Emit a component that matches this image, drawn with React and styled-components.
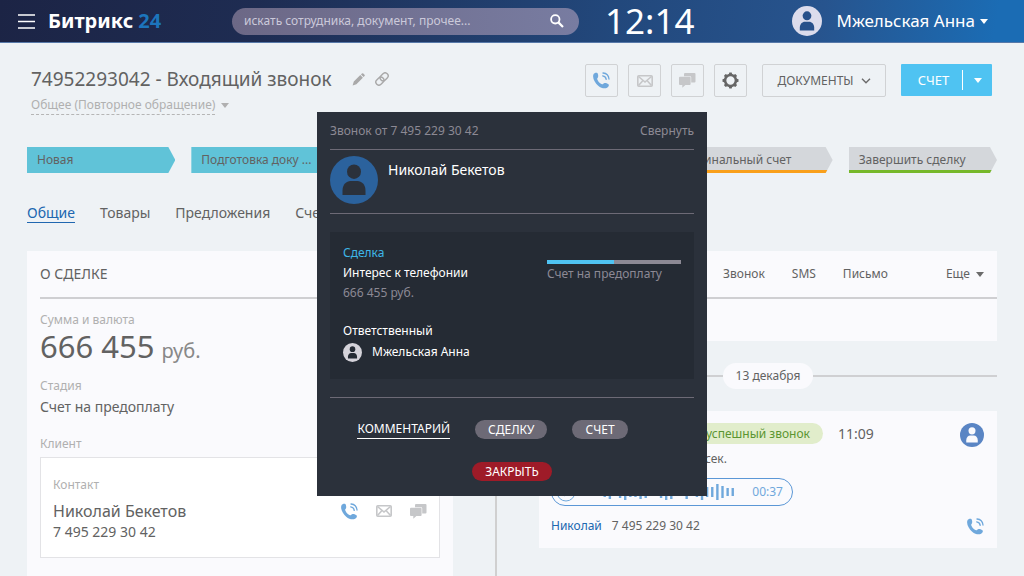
import React from 'react'
import styled, { createGlobalStyle } from 'styled-components'

const stages = [
  { name: 'Новая', done: true },
  { name: 'Подготовка доку ...', done: true },
  { name: 'В работе', done: true },
  { name: 'Счет на предоплату' },
  { name: 'Финальный счет', line: '#f9a01b' },
  { name: 'Завершить сделку', line: '#76b82a' },
]
const tabs = ['Общие', 'Товары', 'Предложения', 'Счета']
const actions = ['Комментарий', 'Ждать', 'Звонок', 'SMS', 'Письмо']
const wave = [4, 2, 5, 7, 2, 6, 8, 5, 5, 7, 6, 4, 2, 6, 8, 7, 4, 2, 7, 2, 5, 8, 5, 5, 8, 6, 4, 4]

function PhoneIcon() {
  return (
    <svg width="17" height="17" viewBox="0 0 17 17" aria-hidden="true">
      <path
        fill="#6fa8dc"
        d="M.8 1.8C1.6.8 3.5.4 4.3 1c.8.8 1.2 3.2.7 4.3-.2.6-.9.9-.8 1.700.4 2 2.900 4.800 5 5.200.8.1 1.200-.8 1.900-1 1.300-.4 3.800.4 4.600 1.400.6 1-.3 2.500-1.600 3.200-2.400 1.200-6 .5-8.900-2.100C2.300 11.200.2 7.600.1 4.500.1 3.400.2 2.500.8 1.800z"
      />
      <g fill="none" stroke="#6fa8dc" strokeLinecap="round">
        <path strokeWidth="1.300" d="M10 1c3.300.3 5.700 2.700 6 6" />
        <path strokeWidth="1.300" d="M9.700 3.800c2 .3 3.300 1.500 3.500 3.600" />
      </g>
    </svg>
  )
}

function MailIcon() {
  return (
    <svg width="16" height="12" viewBox="0 0 16 12" fill="none" stroke="#c6c7c9" strokeWidth="1.600" aria-hidden="true">
      <rect x=".8" y=".8" width="14.400" height="10.400" rx="1" />
      <path d="M1.500 1.500 8 7l6.500-5.500M1.500 10.500 6 5.500M14.500 10.500 10 5.500" />
    </svg>
  )
}

function ChatIcon() {
  return (
    <svg width="17" height="15" viewBox="0 0 17 15" fill="#c6c7c9" aria-hidden="true">
      <path d="M6 0h9.500a1 1 0 0 1 1 1v7.600a1 1 0 0 1-1 1h-3.300V4.200a1 1 0 0 0-1-1H5V1a1 1 0 0 1 1-1z" />
      <path d="M1 3.700h9.600a1 1 0 0 1 1 1V11a1 1 0 0 1-1 1H6.400l-3.100 2.800V12H1a1 1 0 0 1-1-1V4.700a1 1 0 0 1 1-1z" />
    </svg>
  )
}

function GearIcon() {
  return (
    <svg width="17" height="17" viewBox="0 0 17 17" aria-hidden="true">
      <circle cx="8.500" cy="8.500" r="5.400" fill="none" stroke="#666" strokeWidth="2.500" />
      {[0, 45, 90, 135, 180, 225, 270, 315].map(a => (
        <path key={a} fill="#666" d="M6.600 3 7.300.5h2.400L10.400 3z" transform={`rotate(${a} 8.500 8.500)`} />
      ))}
    </svg>
  )
}

function PencilIcon() {
  return (
    <svg width="13" height="13" viewBox="0 0 13 13" fill="#a9a9a9" aria-hidden="true">
      <path d="M.6 12.400 1.800 8.600 8.300 2.100l2.600 2.600-6.500 6.500zM9 1.400l.9-.9a1 1 0 0 1 1.400 0l1.200 1.200a1 1 0 0 1 0 1.400l-.9.9z" />
    </svg>
  )
}

function LinkIcon() {
  return (
    <svg width="14" height="14" viewBox="0 0 14 14" fill="none" stroke="#a9a9a9" strokeWidth="1.400" aria-hidden="true">
      <g transform="rotate(-45 7 7)">
        <rect x="-.4" y="4" width="8.800" height="6" rx="3" />
        <rect x="5.600" y="4" width="8.800" height="6" rx="3" />
      </g>
    </svg>
  )
}

function Avatar({ size, bg, fg }) {
  return (
    <svg width={size} height={size} viewBox="0 0 48 48" aria-hidden="true">
      <circle cx="24" cy="24" r="24" fill={bg} />
      <ellipse cx="24" cy="15.700" rx="7" ry="7.200" fill={fg} />
      <path fill={fg} d="M12.500 39v-4.500c0-6 4-9.500 8-9.500h7c4 0 8 3.500 8 9.500V39z" />
    </svg>
  )
}

function Waveform() {
  return (
    <svg width="142" height="18" viewBox="0 0 142 18" stroke="#6fa8dc" strokeWidth="2.400" aria-hidden="true">
      {wave.map((h, i) => (
        <path key={i} d={`M${1.5 + i * 5.12} ${9 - h}v${h * 2}`} />
      ))}
    </svg>
  )
}

function CallDialog() {
  return (
    <Overlay>
      <Dialog role="dialog" aria-label="Звонок от 7 495 229 30 42">
        <DialogHead>
          <span>Звонок от 7 495 229 30 42</span>
          <TextButton>Свернуть</TextButton>
        </DialogHead>
        <Caller>
          <Avatar size={48} bg="#2b629d" fg="#2b313b" />
          <CallerName>Николай Бекетов</CallerName>
        </Caller>
        <DealBox>
          <div>
            <DealLink href="#deal">Сделка</DealLink>
            <Strong>Интерес к телефонии</Strong>
            <Muted>666 455 руб.</Muted>
            <Responsible>
              <Strong>Ответственный</Strong>
              <Person>
                <Avatar size={19} bg="#d5d3da" fg="#252b34" />
                Мжельская Анна
              </Person>
            </Responsible>
          </div>
          <Stage>
            <Progress role="progressbar" aria-label="Счет на предоплату" aria-valuenow={50}>
              <ProgressFill style={{ width: '50%' }} />
            </Progress>
            <Muted>Счет на предоплату</Muted>
          </Stage>
        </DealBox>
        <DialogActions>
          <CommentButton>КОММЕНТАРИЙ</CommentButton>
          <PillButton>СДЕЛКУ</PillButton>
          <PillButton>СЧЕТ</PillButton>
        </DialogActions>
        <CloseRow>
          <PillButton $danger>ЗАКРЫТЬ</PillButton>
        </CloseRow>
      </Dialog>
    </Overlay>
  )
}

export default function App() {
  return (
    <Page>
      <GlobalStyle />
      <Header>
        <MenuButton aria-label="Меню">
          <svg width="17" height="15" viewBox="0 0 17 15" stroke="#fff" strokeWidth="1.600">
            <path d="M0 1h17M0 7.500h17M0 14h17" />
          </svg>
        </MenuButton>
        <Logo href="#home">Битрикс <b>24</b></Logo>
        <Search>
          <SearchInput type="search" aria-label="Поиск" placeholder="искать сотрудника, документ, прочее..." />
          <svg width="14" height="14" viewBox="0 0 14 14" fill="none" stroke="#fff" aria-hidden="true">
            <circle cx="5.300" cy="5.300" r="4.200" strokeWidth="1.800" />
            <path d="m8.600 8.600 4.400 4.400" strokeWidth="2.200" />
          </svg>
        </Search>
        <Clock>12:14</Clock>
        <UserMenu>
          <Avatar size={30} bg="#dcdcec" fg="#27508a" />
          <span>Мжельская Анна</span>
          <Caret $color="#fff" />
        </UserMenu>
      </Header>

      <Main>
        <TopRow>
          <Heading>
            <Title>
              74952293042 - Входящий звонок
              <PencilIcon />
              <LinkIcon />
            </Title>
            <Category>
              <span>Общее (Повторное обращение)</span>
              <Caret $color="#b0b0b0" />
            </Category>
          </Heading>
          <Toolbar>
            <IconButton aria-label="Позвонить"><PhoneIcon /></IconButton>
            <IconButton aria-label="Письмо"><MailIcon /></IconButton>
            <IconButton aria-label="Чат"><ChatIcon /></IconButton>
            <IconButton aria-label="Настройки"><GearIcon /></IconButton>
          </Toolbar>
          <DocsButton>
            ДОКУМЕНТЫ
            <svg width="10" height="6" viewBox="0 0 10 6" fill="none" stroke="#6b6b6b" strokeWidth="1.400">
              <path d="m1 .8 4 4 4-4" />
            </svg>
          </DocsButton>
          <BillButton>
            <span>СЧЕТ</span>
            <Caret $color="#fff" />
          </BillButton>
        </TopRow>

        <Stages>
          {stages.map(s => (
            <StageItem key={s.name} $done={s.done} $line={s.line}>{s.name}</StageItem>
          ))}
        </Stages>

        <Tabs>
          {tabs.map((t, i) => (
            <Tab key={t} href="#tab" $active={i === 0}>{t}</Tab>
          ))}
        </Tabs>

        <Columns>
          <DealCard>
            <CardTitle>О СДЕЛКЕ</CardTitle>
            <Field>
              <Label>Сумма и валюта</Label>
              <Amount>666 455 <small>руб.</small></Amount>
            </Field>
            <Field>
              <Label>Стадия</Label>
              <Value>Счет на предоплату</Value>
            </Field>
            <ClientField>
              <Label>Клиент</Label>
              <Contact>
                <Label>Контакт</Label>
                <ContactRow>
                  <ContactName>Николай Бекетов</ContactName>
                  <GhostButton aria-label="Позвонить"><PhoneIcon /></GhostButton>
                  <GhostButton aria-label="Письмо"><MailIcon /></GhostButton>
                  <GhostButton aria-label="Чат"><ChatIcon /></GhostButton>
                </ContactRow>
                <ContactPhone>7 495 229 30 42</ContactPhone>
              </Contact>
            </ClientField>
          </DealCard>

          <Divider />

          <Timeline>
            <Composer>
              <ActionBar>
                {actions.map(a => <ActionLink key={a} href="#action">{a}</ActionLink>)}
                <More href="#more">Еще <Caret $color="#6b6b6b" /></More>
              </ActionBar>
            </Composer>
            <DateRow><DatePill>13 декабря</DatePill></DateRow>
            <CallCard>
              <CallHead>
                <CallKind>Входящий звонок</CallKind>
                <Badge>успешный звонок</Badge>
                <time>11:09</time>
                <Avatar size={24} bg="#5a85c4" fg="#fafafd" />
              </CallHead>
              <Duration>Длительность звонка – 37 сек.</Duration>
              <Player>
                <GhostButton aria-label="Слушать">
                  <svg width="20" height="20" viewBox="0 0 20 20" fill="none" stroke="#6fa8dc">
                    <circle cx="10" cy="10" r="9" />
                    <path d="M8 6v8l6-4z" fill="#6fa8dc" />
                  </svg>
                </GhostButton>
                <Waveform />
                <span>00:37</span>
              </Player>
              <CallFoot>
                <a href="#client">Николай</a>
                <span>7 495 229 30 42</span>
                <GhostButton aria-label="Перезвонить"><PhoneIcon /></GhostButton>
              </CallFoot>
            </CallCard>
          </Timeline>
        </Columns>
      </Main>
      <CallDialog />
    </Page>
  )
}

const GlobalStyle = createGlobalStyle`
  * { box-sizing: border-box; }
  body {
    margin: 0;
    background: #eef2f5;
    color: #626262;
    font: 13px/20px "Noto Sans", "Open Sans", sans-serif;
  }
  a { color: inherit; text-decoration: none; }
  button {
    margin: 0;
    padding: 0;
    border: 0;
    background: none;
    color: inherit;
    font: inherit;
    cursor: pointer;
  }
  svg { display: block; flex: none; }
`
const Page = styled.div`
  display: flex;
  flex-direction: column;
  min-height: 100vh;
`
const Caret = styled.i`
  flex: none;
  border: 4px solid transparent;
  border-top: 5px solid ${props => props.$color};
  border-bottom: 0;
`

// header
const Header = styled.header`
  display: flex;
  align-items: center;
  height: 43px;
  padding: 0 36px 0 18px;
  border-bottom: 1px solid #5779a9;
  background: linear-gradient(100deg, #1c2445 0%, #1e2c52 25%, #22487c 60%, #27548e 80%, #1b6cb4 97%);
  color: #fff;
`
const MenuButton = styled.button``
const Logo = styled.a`
  margin-left: 13px;
  font-size: 20px;
  font-weight: 700;
  white-space: nowrap;
  b { color: #1c75bc; font-weight: 700; }
`
const Search = styled.label`
  display: flex;
  align-items: center;
  flex: 0 1 347px;
  height: 27px;
  margin-left: auto;
  padding: 0 15px 0 12px;
  border-radius: 14px;
  background: linear-gradient(90deg, #6c6886, #787ca1);
`
const SearchInput = styled.input`
  flex: 1;
  min-width: 0;
  padding: 0;
  border: 0;
  outline: 0;
  background: none;
  color: #fff;
  font: inherit;
  font-size: 12px;
  &::placeholder { color: #cbc9da; opacity: 1; }
`
const Clock = styled.time`
  margin-left: 26px;
  font-size: 35px;
  line-height: 42px;
`
const UserMenu = styled.button`
  display: flex;
  align-items: center;
  margin-left: 98px;
  font-size: 17px;
  white-space: nowrap;
  span { margin: 0 5px 0 14px; }
`

// deal heading
const Main = styled.main`
  display: flex;
  flex: 1;
  flex-direction: column;
  padding: 21px 27px 0;
`
const TopRow = styled.div`
  display: flex;
  align-items: flex-start;
  padding: 0 5px 0 4px;
`
const Heading = styled.div`
  flex: 1;
`
const Title = styled.h1`
  display: flex;
  align-items: center;
  gap: 10px;
  margin: 0;
  font-size: 19px;
  font-weight: 400;
  line-height: 30px;
  white-space: nowrap;
  svg:first-of-type { margin-left: 10px; }
`
const Category = styled.button`
  display: flex;
  align-items: center;
  gap: 6px;
  margin-top: 2px;
  color: #b0b0b0;
  font-size: 12px;
  line-height: 18px;
  span { border-bottom: 1px dashed #b5b5b5; }
`
const Toolbar = styled.div`
  display: flex;
  gap: 10px;
`
const IconButton = styled.button`
  display: grid;
  place-items: center;
  width: 33px;
  height: 33px;
  border: 1px solid #d0d2d4;
  border-radius: 2px;
`
const DocsButton = styled.button`
  display: flex;
  align-items: center;
  justify-content: center;
  gap: 7px;
  width: 124px;
  height: 33px;
  margin-left: 15px;
  border: 1px solid #d0d2d4;
  border-radius: 2px;
  font-size: 12px;
`
const BillButton = styled.button`
  display: flex;
  align-items: center;
  width: 91px;
  height: 32px;
  margin-left: 15px;
  border-radius: 1px;
  background: #4fc3f2;
  color: #fff;
  span {
    flex: 1;
    padding-left: 4px;
    border-right: 1px solid #fff;
  }
  i { margin: 0 10px 0 11px; }
`

const Stages = styled.div`
  display: flex;
  gap: 16px;
  margin-top: 32px;
`
const StageItem = styled.div`
  flex: 1 1 0;
  min-width: 0;
  height: 26px;
  padding: 0 10px;
  overflow: hidden;
  background: ${props => props.$done ? '#60c3d8' : '#d4d7db'};
  box-shadow: ${props => props.$line ? `inset 0 -3px ${props.$line}` : 'none'};
  clip-path: polygon(0 0, calc(100% - 7px) 0, 100% 50%, calc(100% - 7px) 100%, 0 100%);
  font-size: 12px;
  line-height: 26px;
  white-space: nowrap;
`
const Tabs = styled.nav`
  display: flex;
  gap: 25px;
  margin-top: 31px;
`
const Tab = styled.a`
  border-bottom: 1px solid ${props => props.$active ? '#2067b0' : 'transparent'};
  color: ${props => props.$active ? '#2067b0' : 'inherit'};
  font-size: 14px;
  line-height: 18px;
`

// two columns under the tabs
const Columns = styled.div`
  display: grid;
  flex: 1;
  grid-template-columns: 426fr 2px 458fr;
  column-gap: 42px;
  margin-top: 28px;
`
const Divider = styled.div`
  background: #d0d0d0;
`
const DealCard = styled.section`
  padding: 0 13px 16px;
  background: #fafafd;
`
const CardTitle = styled.h2`
  margin: 0 0 13px;
  border-bottom: 2px solid #cfcfd2;
  font-size: 14px;
  font-weight: 400;
  line-height: 46px;
`
const Field = styled.div`
  margin-bottom: 14px;
`
const ClientField = styled.div`
  margin-top: 19px;
`
const Label = styled.div`
  color: #b0b0b0;
  font-size: 12px;
  line-height: 16px;
`
const Amount = styled.div`
  display: flex;
  align-items: baseline;
  gap: 7px;
  height: 36px;
  font-size: 31px;
  line-height: 36px;
  small { color: #888; font-size: 20px; }
`
const Value = styled.div`
  margin-top: 3px;
  font-size: 14px;
`
const Contact = styled.div`
  margin-top: 5px;
  padding: 19px 12px 15px;
  border: 1px solid #e3e3e6;
  background: #fff;
`
const ContactRow = styled.div`
  display: flex;
  align-items: center;
  gap: 18px;
  margin-top: 7px;
`
const ContactName = styled.div`
  flex: 1;
  font-size: 16px;
  line-height: 22px;
`
const ContactPhone = styled.div`
  font-size: 14px;
`
const GhostButton = styled.button``

const Timeline = styled.section`
  min-width: 0;
  font-size: 12px;
`
const Composer = styled.div`
  height: 90px;
  background: #fafafd;
`
const ActionBar = styled.nav`
  display: flex;
  gap: 27px;
  padding: 0 13px 0 12px;
  border-bottom: 2px solid #cfcfd2;
  line-height: 46px;
`
const ActionLink = styled.a``
const More = styled.a`
  display: flex;
  align-items: center;
  gap: 6px;
  margin-left: auto;
`
const DateRow = styled.div`
  display: flex;
  align-items: center;
  margin: 22px 0;
  &::before, &::after {
    content: '';
    flex: 1;
    height: 2px;
    background: #cfd0d2;
  }
`
const DatePill = styled.span`
  padding: 0 13px;
  border-radius: 13px;
  background: #fafafd;
  line-height: 26px;
`
const CallCard = styled.article`
  padding: 12px 13px 12px 12px;
  background: #fafafd;
`
const CallHead = styled.div`
  display: flex;
  align-items: flex-start;
  line-height: 21px;
  time { flex: 1; font-size: 14px; }
`
const CallKind = styled.b`
  flex: none;
  width: 142px;
`
const Badge = styled.span`
  margin-right: 15px;
  padding: 0 13px;
  border-radius: 11px;
  background: #e1edcb;
  color: #5b9531;
`
const Duration = styled.div`
  margin-top: 2px;
`
const Player = styled.div`
  display: flex;
  align-items: center;
  justify-content: space-between;
  width: 242px;
  height: 28px;
  margin-top: 9px;
  padding: 0 9px 0 4px;
  border: 1px solid #5b97d6;
  border-radius: 14px;
  color: #6fa8dc;
`
const CallFoot = styled.div`
  display: flex;
  align-items: center;
  gap: 10px;
  margin-top: 10px;
  a { color: #2067b0; }
  button { margin-left: auto; }
`

// incoming call dialog
const Overlay = styled.div`
  position: fixed;
  inset: 0;
  display: flex;
  align-items: flex-start;
  justify-content: center;
  padding-top: 112px;
`
const Dialog = styled.section`
  width: 390px;
  max-width: 100%;
  padding: 0 13px 15px;
  background: #2b313b;
  color: #fff;
  font-size: 12px;
`
const DialogHead = styled.div`
  display: flex;
  justify-content: space-between;
  border-bottom: 1px solid #6d6a76;
  color: #8c8994;
  line-height: 37px;
`
const TextButton = styled.button``
const Caller = styled.div`
  display: flex;
  gap: 10px;
  padding: 6px 0 9px;
  border-bottom: 1px solid #6d6a76;
`
const CallerName = styled.div`
  padding-top: 4px;
  font-size: 14px;
`
const DealBox = styled.div`
  display: flex;
  justify-content: space-between;
  margin: 18px 0;
  padding: 11px 13px 17px;
  background: #252b34;
`
const DealLink = styled.a`
  color: #3eb6e8;
`
const Strong = styled.div``
const Muted = styled.div`
  color: #8c8994;
`
const Responsible = styled.div`
  margin-top: 18px;
`
const Person = styled.div`
  display: flex;
  align-items: center;
  gap: 10px;
  margin-top: 1px;
`
const Stage = styled.div`
  width: 134px;
  padding-top: 17px;
`
const Progress = styled.div`
  height: 4px;
  background: #8c8994;
`
const ProgressFill = styled.div`
  height: 100%;
  background: #4fc3f2;
`
const DialogActions = styled.div`
  display: flex;
  justify-content: center;
  gap: 25px;
  padding: 22px 39px 0 0;
  border-top: 1px solid #6d6a76;
`
const CommentButton = styled.button`
  border-bottom: 1px solid #fff;
  line-height: 18px;
`
const PillButton = styled.button`
  padding: 0 13px;
  border-radius: 10px;
  background: ${props => props.$danger ? '#9e1b28' : '#6d6a76'};
  line-height: 19px;
`
const CloseRow = styled.div`
  display: flex;
  justify-content: center;
  margin-top: 23px;
`
